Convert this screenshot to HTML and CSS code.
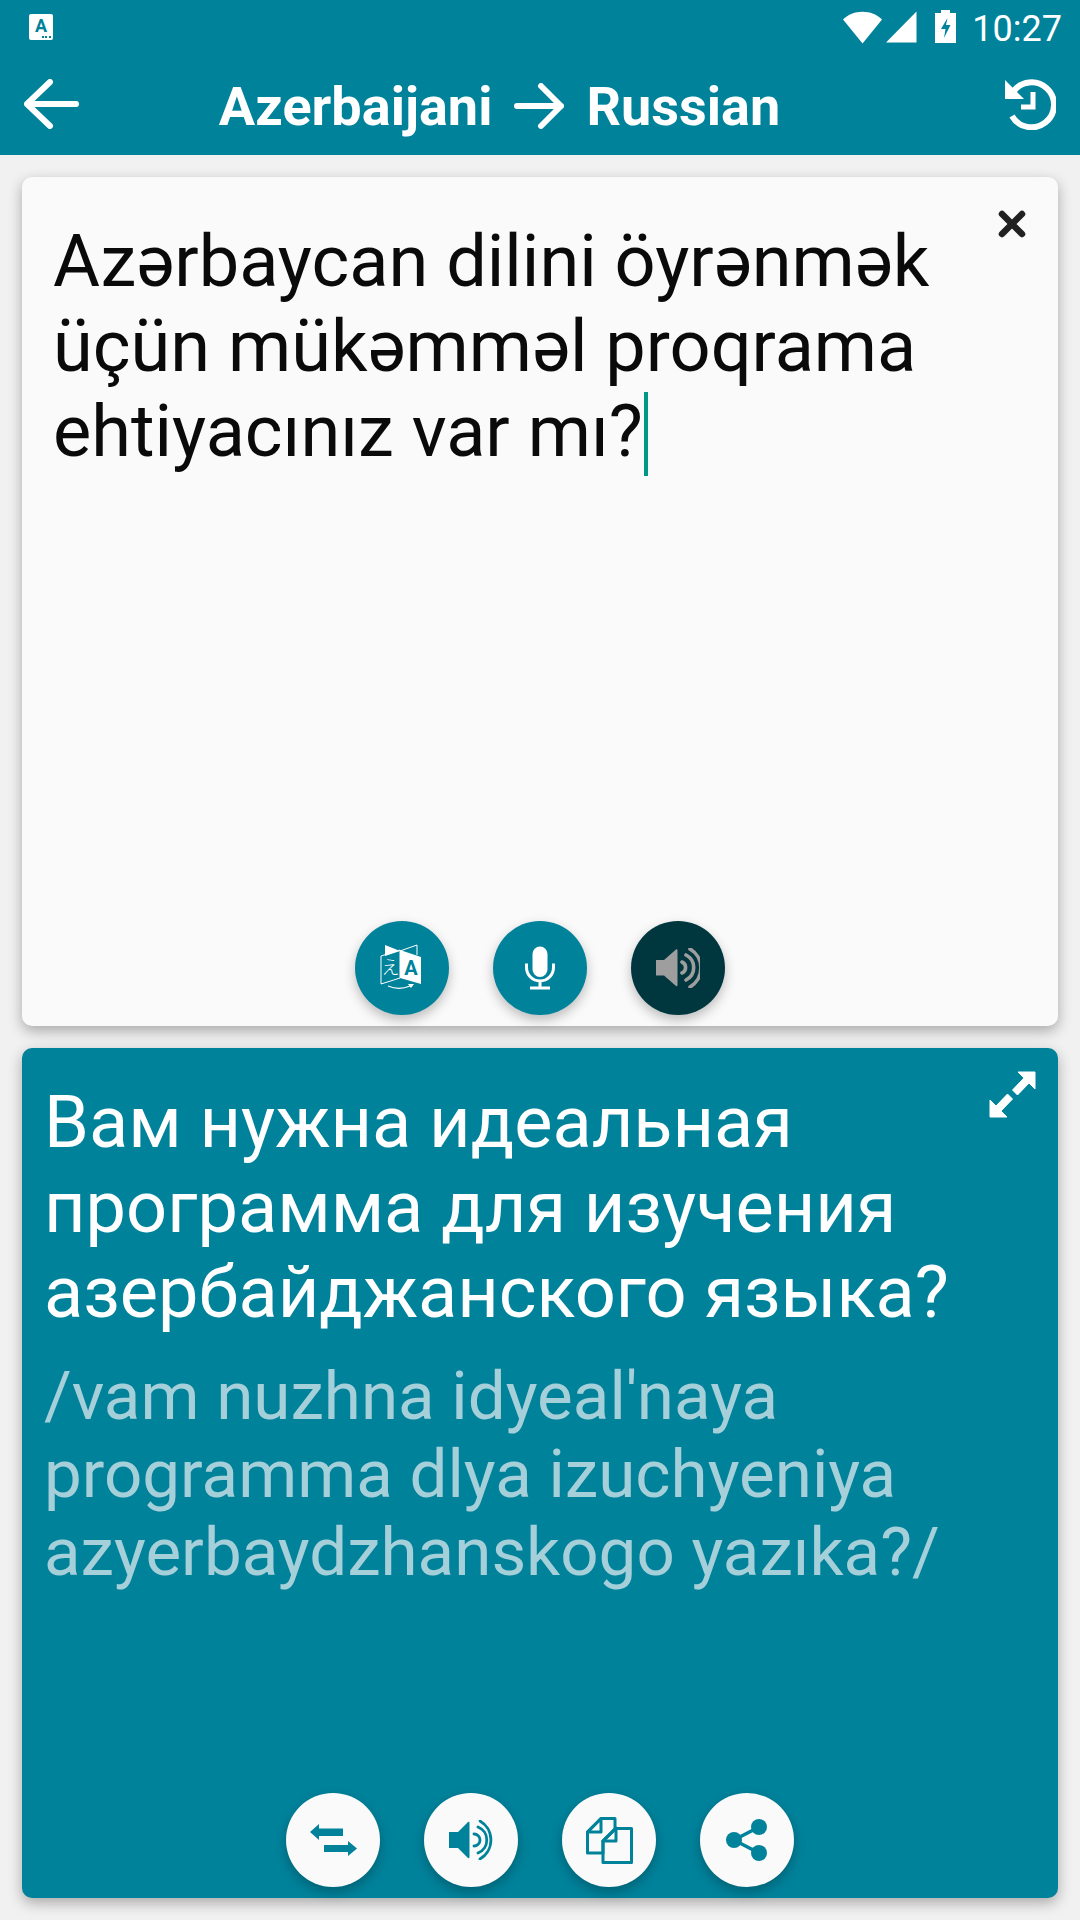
FILE: index.html
```html
<!DOCTYPE html>
<html lang="en">
<head>
    <meta charset="UTF-8">
    <meta name="viewport" content="width=device-width, initial-scale=1.0">
    <title>Azerbaijani Russian Translator</title>
    <link rel="stylesheet" href="styles.css">
</head>
<body>
    <header class="app-header">
        <div class="status-bar">
            <div class="notif-icon"><span class="notif-letter">A</span><span class="notif-dots"></span></div>
            <div class="status-right">
                <svg class="wifi-icon" viewBox="0 0 39 33"><path d="M0 8.500C5 3.500 12 .8 19.500 .8S34 3.500 39 8.500L19.500 32.500z" fill="#fff"/></svg>
                <svg class="signal-icon" viewBox="0 0 31 32"><path d="M30.500 .5V31.500H0z" fill="#fff"/></svg>
                <svg class="battery-icon" viewBox="0 0 21 33"><path fill="#fff" fill-rule="evenodd" d="M6 0h9v3h6v30H0V3h6zM12.500 8L6 19h4.500l-1.500 9L15.500 15H11z"/></svg>
                <span class="clock">10:27</span>
            </div>
        </div>
        <div class="toolbar">
            <svg class="back-icon" viewBox="0 0 56 50"><path d="M27 3L4 25l23 22M4 25h49" fill="none" stroke="#fff" stroke-width="6" stroke-linecap="round" stroke-linejoin="round"/></svg>
            <div class="title">
                <span>Azerbaijani</span>
                <svg class="title-arrow" viewBox="0 0 50 46"><path d="M27 3l20 20-20 20M3 23h44" fill="none" stroke="#fff" stroke-width="6" stroke-linecap="round" stroke-linejoin="round"/></svg>
                <span>Russian</span>
            </div>
            <svg class="history-icon" viewBox="0 0 52 52"><path d="M1 2v19h19z" fill="#fff"/><path d="M9 14A22.500 22.500 0 1 1 8 38" fill="none" stroke="#fff" stroke-width="6"/><path d="M29 14v15H17" fill="none" stroke="#fff" stroke-width="5"/></svg>
        </div>
    </header>

    <main class="cards">
        <section class="card card-input">
            <svg class="close-icon" viewBox="0 0 28 28"><path d="M4 4l20 20M24 4L4 24" fill="none" stroke="#212121" stroke-width="6.500" stroke-linecap="round"/></svg>
            <p class="source-text">Azərbaycan dilini öyrənmək üçün mükəmməl proqrama ehtiyacınız var mı?<span class="caret"></span></p>
            <div class="actions">
                <button class="round-btn teal">
                    <svg viewBox="0 0 44 48" class="icon-translate">
                        <path d="M1 12L20 6V34L1 40z" fill="none" stroke="#fff" stroke-width="1"/>
                        <path d="M5 1L20 7 5 12z" fill="#fff"/>
                        <path d="M20 7L37 1V11" fill="none" stroke="#fff" stroke-width="1"/>
                        <path d="M20 6L41 13V40L20 34z" fill="#fff"/>
                        <text x="31" y="31" class="tr-latin">A</text>
                        <text x="10.500" y="30" class="tr-kana">え</text>
                        <path d="M8 42c7 3 15 3 22 0" fill="none" stroke="#fff" stroke-width="1.200"/>
                        <path d="M28 40l6 0-3 4z" fill="#fff"/>
                    </svg>
                </button>
                <button class="round-btn teal">
                    <svg viewBox="0 0 44 44" class="icon-mic"><rect x="14.500" y=".5" width="15" height="30.500" rx="7.500" fill="#fff"/><path d="M8.500 17.500v4a13.500 13.500 0 0 0 27 0v-4M22 35v6M12 42h20" fill="none" stroke="#fff" stroke-width="3"/></svg>
                </button>
                <button class="round-btn dark">
                    <svg viewBox="0 0 44 40" class="icon-speaker"><path d="M0 12h8L20 1.500c.8-.5 1.500 0 1.500 1V37c0 1-.7 1.500-1.500 1L8 27.500H0z" fill="#9e9e9e"/><path d="M26 14a6 6 0 0 1 0 11M30 7a14 14 0 0 1 0 25M34 1a22 22 0 0 1 0 38" fill="none" stroke="#9e9e9e" stroke-width="3.600" stroke-linecap="round"/></svg>
                </button>
            </div>
        </section>

        <section class="card card-output">
            <svg class="expand-icon" viewBox="0 0 47 47"><path d="M29 1H46V18L40 12 28.500 24 23.500 19 35 7zM18 46H1V29L7 35 18.500 23 23.500 28 12 40z" fill="#fff" stroke="#fff" stroke-width="1" stroke-linejoin="round"/></svg>
            <p class="target-text">Вам нужна идеальная программа для изучения азербайджанского языка?</p>
            <p class="translit-text">/vam nuzhna idyeal'naya programma dlya izuchyeniya azyerbaydzhanskogo yazıka?/</p>
            <div class="actions actions-output">
                <button class="round-btn white">
                    <svg viewBox="0 0 47 32" class="icon-swap"><path d="M0 8l9-8v4.500h24V12H9v4zM47 24.500L38 32v-4H14v-7h24v-4z" fill="#00829b"/></svg>
                </button>
                <button class="round-btn white">
                    <svg viewBox="0 0 44 40" class="icon-speaker"><path d="M0 12h9L19 2c.8-.5 1.500 0 1.500 1V37c0 1-.7 1.500-1.500 1L9 28H0z" fill="#00829b"/><path d="M25 14a6 6 0 0 1 0 12M29 7a14 14 0 0 1 0 26M31 1a22 22 0 0 1 0 38" fill="none" stroke="#00829b" stroke-width="2.800" stroke-linecap="round"/></svg>
                </button>
                <button class="round-btn white">
                    <svg viewBox="0 0 47 47" class="icon-copy"><path d="M15 1.500H29V11H30L17 24V36H1.500V15z" fill="none" stroke="#00829b" stroke-width="3" stroke-linejoin="round"/><path d="M15 1.500L1.500 15H15zM30 11L17 24H30z" fill="none" stroke="#00829b" stroke-width="3" stroke-linejoin="round"/><path d="M30 11.500H45.500V45.500H17V24z" fill="none" stroke="#00829b" stroke-width="3" stroke-linejoin="round"/></svg>
                </button>
                <button class="round-btn white">
                    <svg viewBox="0 0 42 42" class="icon-share"><circle cx="8" cy="21" r="8" fill="#00829b"/><circle cx="33" cy="8" r="8" fill="#00829b"/><circle cx="33" cy="34" r="8" fill="#00829b"/><path d="M8 21L33 8M8 21l25 13" stroke="#00829b" stroke-width="3.500"/></svg>
                </button>
            </div>
        </section>
    </main>
</body>
</html>
```

FILE: styles.css
```css
html, body {
    margin: 0;
    padding: 0;
}

body {
    width: 1080px;
    height: 1920px;
    display: flex;
    flex-direction: column;
    overflow: hidden;
    background-color: #f1f1f1;
    font-family: Roboto, sans-serif;
}

.app-header {
    height: 155px;
    flex-shrink: 0;
    background-color: #00829b;
    color: #fff;
    display: flex;
    flex-direction: column;
}

.status-bar {
    height: 52px;
    padding: 9px 18px 0 29px;
    box-sizing: border-box;
    display: flex;
    justify-content: space-between;
    align-items: flex-start;
}

.notif-icon {
    position: relative;
    width: 24px;
    height: 26px;
    margin-top: 5px;
    background-color: #fff;
    border-radius: 2px;
    text-align: center;
}

.notif-letter {
    display: block;
    font-size: 18px;
    font-weight: 700;
    line-height: 24px;
    color: #00829b;
}

.notif-dots {
    position: absolute;
    right: 2px;
    bottom: 2px;
    width: 9px;
    border-top: 2px dotted #00829b;
}

.status-right {
    display: flex;
    align-items: flex-start;
}

.wifi-icon {
    width: 39px;
    height: 33px;
    margin: 2px 4px 0 0;
}

.signal-icon {
    width: 31px;
    height: 32px;
    margin: 2px 18px 0 0;
}

.battery-icon {
    width: 21px;
    height: 33px;
    margin: 1px 16px 0 0;
}

.clock {
    font-size: 36px;
    line-height: 40px;
}

.toolbar {
    flex: 1;
    display: flex;
    align-items: center;
    justify-content: space-between;
    padding: 0 24px 0 23px;
}

.back-icon {
    width: 56px;
    height: 50px;
}

.title {
    display: flex;
    align-items: center;
    gap: 22px;
    margin: 5px 84px 0 0;
    font-size: 54px;
    font-weight: 700;
}

.title-arrow {
    width: 50px;
    height: 46px;
}

.history-icon {
    width: 52px;
    height: 52px;
}

.cards {
    flex: 1;
    display: flex;
    flex-direction: column;
    gap: 22px;
    padding: 22px 22px 22px;
}

.card {
    position: relative;
    display: flex;
    flex-direction: column;
    border-radius: 10px;
    box-sizing: border-box;
    box-shadow: 0 5px 14px rgba(0, 0, 0, 0.3);
}

.card-input {
    flex: 0 0 849px;
    background-color: #fafafa;
    padding: 42px 0 11px 31px;
}

.card-output {
    flex: 1;
    background-color: #00829b;
    padding: 32px 0 11px 22px;
}

.source-text {
    margin: 0;
    padding-right: 90px;
    font-size: 72.1px;
    line-height: 85px;
    color: #0a0a0a;
}

.caret {
    display: inline-block;
    width: 4px;
    height: 84px;
    margin-left: 1px;
    vertical-align: -20px;
    background-color: #009688;
}

.target-text {
    margin: 0;
    padding-right: 90px;
    font-size: 72.1px;
    line-height: 85px;
    color: #fff;
}

.translit-text {
    margin: 22px 0 0;
    padding-right: 90px;
    font-size: 67.3px;
    line-height: 78px;
    color: #a5cfd9;
}

.close-icon {
    position: absolute;
    top: 33px;
    right: 32px;
    width: 28px;
    height: 28px;
}

.expand-icon {
    position: absolute;
    top: 23px;
    right: 22px;
    width: 47px;
    height: 47px;
}

.actions {
    margin-top: auto;
    display: flex;
    justify-content: center;
    gap: 44px;
    padding-right: 31px;
}

.actions-output {
    padding-right: 22px;
}

.round-btn {
    width: 94px;
    height: 94px;
    padding: 0;
    border: none;
    border-radius: 50%;
    display: flex;
    align-items: center;
    justify-content: center;
    box-shadow: 0 5px 12px rgba(0, 0, 0, 0.25);
}

.round-btn.teal {
    background-color: #00829b;
}

.round-btn.dark {
    background-color: #00373f;
}

.round-btn.white {
    background-color: #fafafa;
}

.icon-translate {
    width: 44px;
    height: 48px;
}

.icon-mic {
    width: 44px;
    height: 44px;
}

.icon-speaker {
    width: 44px;
    height: 40px;
}

.icon-swap {
    width: 47px;
    height: 32px;
}

.icon-copy {
    width: 47px;
    height: 47px;
}

.icon-share {
    width: 42px;
    height: 42px;
}

.tr-latin {
    font-family: Roboto, sans-serif;
    font-size: 20px;
    font-weight: 700;
    fill: #00829b;
    text-anchor: middle;
}

.tr-kana {
    font-family: "Noto Sans CJK JP", sans-serif;
    font-size: 18px;
    font-weight: 300;
    fill: #fff;
    text-anchor: middle;
}
```
